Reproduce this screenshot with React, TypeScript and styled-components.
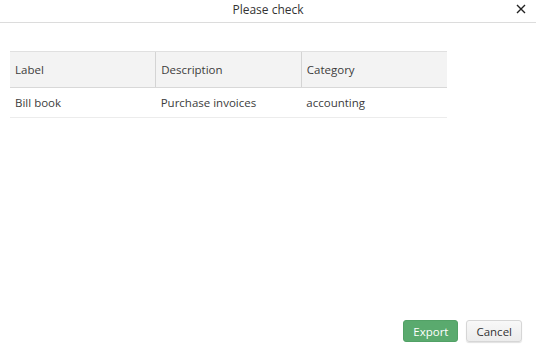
import styled, { createGlobalStyle } from "styled-components";

const GlobalStyle = createGlobalStyle`
  html, body {
    margin: 0;
    padding: 0;
    background: #ffffff;
  }
  body {
    font-family: "Open Sans", "Liberation Sans", sans-serif;
    font-size: 11.5px;
    color: #3c3c3c;
  }
`;

const Dialog = styled.div`
  width: 536px;
  height: 356px;
  display: flex;
  flex-direction: column;
  box-sizing: border-box;
  background: #ffffff;
`;

const TitleBar = styled.div`
  height: 22px;
  border-bottom: 1px solid #dcdcdc;
  display: flex;
  align-items: center;
  justify-content: center;
  position: relative;
  box-sizing: content-box;
`;

const Title = styled.div`
  font-size: 12px;
  color: #333333;
  margin-top: -3px;
`;

const CloseButton = styled.button`
  position: absolute;
  right: 8px;
  top: 2px;
  width: 14px;
  height: 14px;
  padding: 0;
  border: 0;
  background: transparent;
  cursor: pointer;
  display: flex;
  align-items: center;
  justify-content: center;
`;

const Body = styled.div`
  flex: 1;
  padding: 28px 89px 0 10px;
`;

const Table = styled.table`
  width: 437px;
  border-collapse: collapse;
  table-layout: fixed;
`;

const HeadCell = styled.th`
  height: 35px;
  padding: 0 5px;
  text-align: left;
  font-weight: normal;
  background: #f3f3f3;
  border-top: 1px solid #e0e0e0;
  border-bottom: 1px solid #d8d8d8;
  border-left: 1px solid #d4d4d4;
  &:first-child {
    border-left: 0;
  }
`;

const Cell = styled.td`
  height: 29px;
  padding: 0 5px;
  border-bottom: 1px solid #ececec;
`;

const Footer = styled.div`
  display: flex;
  justify-content: flex-end;
  gap: 8px;
  padding: 0 14px 14px 0;
`;

const Button = styled.button<{ $primary?: boolean }>`
  height: 22px;
  padding: 0 9px;
  font-family: "Open Sans", "Liberation Sans", sans-serif;
  font-size: 11.5px;
  border-radius: 3px;
  cursor: pointer;
  color: ${(p) => (p.$primary ? "#ffffff" : "#333333")};
  background: ${(p) =>
    p.$primary ? "#5aaa6e" : "linear-gradient(#f8f8f8, #ececec)"};
  border: 1px solid ${(p) => (p.$primary ? "#52a166" : "#d6d6d6")};
  box-shadow: ${(p) => (p.$primary ? "none" : "0 1px 1px rgba(0,0,0,0.12)")};
`;

const rows = [
  { label: "Bill book", description: "Purchase invoices", category: "accounting" },
];

export default function App() {
  return (
    <Dialog>
      <GlobalStyle />
      <TitleBar>
        <Title>Please check</Title>
        <CloseButton aria-label="Close">
          <svg width="10" height="10" viewBox="0 0 10 10">
            <path d="M1 1 L9 9 M9 1 L1 9" stroke="#222" strokeWidth="1.4" />
          </svg>
        </CloseButton>
      </TitleBar>
      <Body>
        <Table>
          <thead>
            <tr>
              <HeadCell>Label</HeadCell>
              <HeadCell>Description</HeadCell>
              <HeadCell>Category</HeadCell>
            </tr>
          </thead>
          <tbody>
            {rows.map((r) => (
              <tr key={r.label}>
                <Cell>{r.label}</Cell>
                <Cell>{r.description}</Cell>
                <Cell>{r.category}</Cell>
              </tr>
            ))}
          </tbody>
        </Table>
      </Body>
      <Footer>
        <Button $primary>Export</Button>
        <Button>Cancel</Button>
      </Footer>
    </Dialog>
  );
}
